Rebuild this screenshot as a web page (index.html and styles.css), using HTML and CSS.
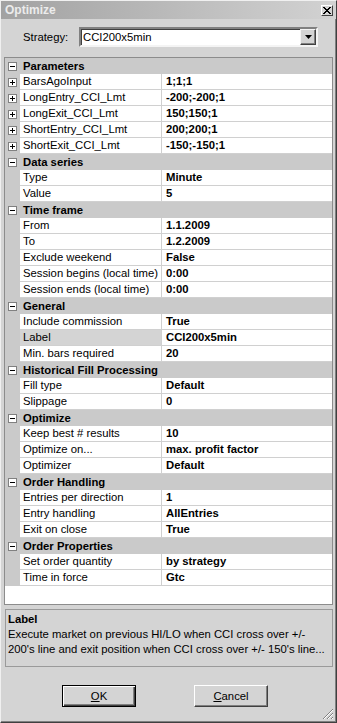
FILE: index.html
```html
<!DOCTYPE html>
<html lang="en">
<head>
    <meta charset="UTF-8">
    <title>Optimize</title>
    <link rel="stylesheet" href="styles.css">
</head>
<body>
    <div class="window">
        <div class="titlebar">
            <span class="title">Optimize</span>
            <span class="close-btn">
                <svg width="8" height="7" viewBox="0 0 8 7"><path d="M0 0 L7 7 M1 0 L8 7 M7 0 L0 7 M8 0 L1 7" stroke="#000" stroke-width="1"/></svg>
            </span>
        </div>

        <div class="strategy-row">
            <label class="strategy-label">Strategy:</label>
            <div class="combo">
                <span class="combo-text">CCI200x5min</span>
                <span class="combo-btn">
                    <svg width="7" height="4" viewBox="0 0 7 4"><path d="M0 0 H7 L3.5 4 Z" fill="#000"/></svg>
                </span>
            </div>
        </div>

        <div class="grid">
            <div class="row category"><span class="gutter"><svg class="box" width="9" height="9" viewBox="0 0 9 9"><rect x="0.5" y="0.5" width="8" height="8" fill="#fff" stroke="#808080"/><path d="M2 4.5 H7" stroke="#000"/></svg></span><span class="cat-name">Parameters</span></div>
            <div class="row"><span class="gutter"><svg class="box" width="9" height="9" viewBox="0 0 9 9"><rect x="0.5" y="0.5" width="8" height="8" fill="#fff" stroke="#808080"/><path d="M2 4.5 H7 M4.5 2 V7" stroke="#000"/></svg></span><span class="name">BarsAgoInput</span><span class="value">1;1;1</span></div>
            <div class="row"><span class="gutter"><svg class="box" width="9" height="9" viewBox="0 0 9 9"><rect x="0.5" y="0.5" width="8" height="8" fill="#fff" stroke="#808080"/><path d="M2 4.5 H7 M4.5 2 V7" stroke="#000"/></svg></span><span class="name">LongEntry_CCI_Lmt</span><span class="value">-200;-200;1</span></div>
            <div class="row"><span class="gutter"><svg class="box" width="9" height="9" viewBox="0 0 9 9"><rect x="0.5" y="0.5" width="8" height="8" fill="#fff" stroke="#808080"/><path d="M2 4.5 H7 M4.5 2 V7" stroke="#000"/></svg></span><span class="name">LongExit_CCI_Lmt</span><span class="value">150;150;1</span></div>
            <div class="row"><span class="gutter"><svg class="box" width="9" height="9" viewBox="0 0 9 9"><rect x="0.5" y="0.5" width="8" height="8" fill="#fff" stroke="#808080"/><path d="M2 4.5 H7 M4.5 2 V7" stroke="#000"/></svg></span><span class="name">ShortEntry_CCI_Lmt</span><span class="value">200;200;1</span></div>
            <div class="row"><span class="gutter"><svg class="box" width="9" height="9" viewBox="0 0 9 9"><rect x="0.5" y="0.5" width="8" height="8" fill="#fff" stroke="#808080"/><path d="M2 4.5 H7 M4.5 2 V7" stroke="#000"/></svg></span><span class="name">ShortExit_CCI_Lmt</span><span class="value">-150;-150;1</span></div>

            <div class="row category"><span class="gutter"><svg class="box" width="9" height="9" viewBox="0 0 9 9"><rect x="0.5" y="0.5" width="8" height="8" fill="#fff" stroke="#808080"/><path d="M2 4.5 H7" stroke="#000"/></svg></span><span class="cat-name">Data series</span></div>
            <div class="row"><span class="gutter"></span><span class="name">Type</span><span class="value">Minute</span></div>
            <div class="row"><span class="gutter"></span><span class="name">Value</span><span class="value">5</span></div>

            <div class="row category"><span class="gutter"><svg class="box" width="9" height="9" viewBox="0 0 9 9"><rect x="0.5" y="0.5" width="8" height="8" fill="#fff" stroke="#808080"/><path d="M2 4.5 H7" stroke="#000"/></svg></span><span class="cat-name">Time frame</span></div>
            <div class="row"><span class="gutter"></span><span class="name">From</span><span class="value">1.1.2009</span></div>
            <div class="row"><span class="gutter"></span><span class="name">To</span><span class="value">1.2.2009</span></div>
            <div class="row"><span class="gutter"></span><span class="name">Exclude weekend</span><span class="value">False</span></div>
            <div class="row"><span class="gutter"></span><span class="name">Session begins (local time)</span><span class="value">0:00</span></div>
            <div class="row"><span class="gutter"></span><span class="name">Session ends (local time)</span><span class="value">0:00</span></div>

            <div class="row category"><span class="gutter"><svg class="box" width="9" height="9" viewBox="0 0 9 9"><rect x="0.5" y="0.5" width="8" height="8" fill="#fff" stroke="#808080"/><path d="M2 4.5 H7" stroke="#000"/></svg></span><span class="cat-name">General</span></div>
            <div class="row"><span class="gutter"></span><span class="name">Include commission</span><span class="value">True</span></div>
            <div class="row"><span class="gutter"></span><span class="name selected">Label</span><span class="value">CCI200x5min</span></div>
            <div class="row"><span class="gutter"></span><span class="name">Min. bars required</span><span class="value">20</span></div>

            <div class="row category"><span class="gutter"><svg class="box" width="9" height="9" viewBox="0 0 9 9"><rect x="0.5" y="0.5" width="8" height="8" fill="#fff" stroke="#808080"/><path d="M2 4.5 H7" stroke="#000"/></svg></span><span class="cat-name">Historical Fill Processing</span></div>
            <div class="row"><span class="gutter"></span><span class="name">Fill type</span><span class="value">Default</span></div>
            <div class="row"><span class="gutter"></span><span class="name">Slippage</span><span class="value">0</span></div>

            <div class="row category"><span class="gutter"><svg class="box" width="9" height="9" viewBox="0 0 9 9"><rect x="0.5" y="0.5" width="8" height="8" fill="#fff" stroke="#808080"/><path d="M2 4.5 H7" stroke="#000"/></svg></span><span class="cat-name">Optimize</span></div>
            <div class="row"><span class="gutter"></span><span class="name">Keep best # results</span><span class="value">10</span></div>
            <div class="row"><span class="gutter"></span><span class="name">Optimize on...</span><span class="value">max. profit factor</span></div>
            <div class="row"><span class="gutter"></span><span class="name">Optimizer</span><span class="value">Default</span></div>

            <div class="row category"><span class="gutter"><svg class="box" width="9" height="9" viewBox="0 0 9 9"><rect x="0.5" y="0.5" width="8" height="8" fill="#fff" stroke="#808080"/><path d="M2 4.5 H7" stroke="#000"/></svg></span><span class="cat-name">Order Handling</span></div>
            <div class="row"><span class="gutter"></span><span class="name">Entries per direction</span><span class="value">1</span></div>
            <div class="row"><span class="gutter"></span><span class="name">Entry handling</span><span class="value">AllEntries</span></div>
            <div class="row"><span class="gutter"></span><span class="name">Exit on close</span><span class="value">True</span></div>

            <div class="row category"><span class="gutter"><svg class="box" width="9" height="9" viewBox="0 0 9 9"><rect x="0.5" y="0.5" width="8" height="8" fill="#fff" stroke="#808080"/><path d="M2 4.5 H7" stroke="#000"/></svg></span><span class="cat-name">Order Properties</span></div>
            <div class="row"><span class="gutter"></span><span class="name">Set order quantity</span><span class="value">by strategy</span></div>
            <div class="row"><span class="gutter"></span><span class="name">Time in force</span><span class="value">Gtc</span></div>
        </div>

        <div class="help">
            <div class="help-title">Label</div>
            <div class="help-text">Execute market on previous HI/LO when CCI cross over +/-<br>200's line and exit position when CCI cross over +/- 150's line...</div>
        </div>

        <div class="buttons">
            <button class="btn default"><u>O</u>K</button>
            <button class="btn"><u>C</u>ancel</button>
        </div>

        <svg class="grip" width="12" height="12" viewBox="0 0 12 12">
            <path d="M11 1 L1 11 M11 5 L5 11 M11 9 L9 11" stroke="#808080" stroke-width="1"/>
            <path d="M11 2 L2 11 M11 6 L6 11 M11 10 L10 11" stroke="#fff" stroke-width="1"/>
        </svg>
    </div>
</body>
</html>
```

FILE: styles.css
```css
body {
    margin: 0;
    font-family: "Liberation Sans", Arial, sans-serif;
    font-size: 11.3px;
    color: #000;
    background-color: #d4d4d4;
}

.window {
    position: relative;
    box-sizing: border-box;
    width: 337px;
    height: 723px;
    background-color: #d4d4d4;
    border: 1px solid;
    border-color: #f0f0f0 #404040 #404040 #f0f0f0;
    box-shadow: inset -1px -1px 0 #808080;
    padding: 0 3px 0 2px;
}

.titlebar {
    display: flex;
    align-items: center;
    justify-content: space-between;
    height: 18px;
    margin: 0 -3px 0 -2px;
    padding: 0 3px 0 4px;
    background: linear-gradient(to right, #a2a2a2, #d2d2d2);
}

.title {
    font-size: 12px;
    font-weight: bold;
    color: #ececec;
}

.close-btn {
    display: flex;
    align-items: center;
    justify-content: center;
    width: 12px;
    height: 11px;
    box-sizing: border-box;
    background-color: #d4d4d4;
    border: 1px solid;
    border-color: #fff #404040 #404040 #fff;
}

.strategy-row {
    display: flex;
    align-items: center;
    margin-top: 8px;
    height: 20px;
}

.strategy-label {
    width: 56px;
    padding-left: 20px;
}

.combo {
    display: flex;
    align-items: center;
    justify-content: space-between;
    box-sizing: border-box;
    width: 239px;
    height: 20px;
    background-color: #fff;
    border: 2px solid;
    border-color: #808080 #f4f4f4 #f4f4f4 #808080;
    box-shadow: inset 1px 1px 0 #404040;
}

.combo-text {
    padding-left: 2px;
}

.combo-btn {
    display: flex;
    align-items: center;
    justify-content: center;
    box-sizing: border-box;
    width: 16px;
    height: 16px;
    background-color: #d4d4d4;
    border: 1px solid;
    border-color: #f4f4f4 #404040 #404040 #f4f4f4;
    box-shadow: inset -1px -1px 0 #808080;
}

.grid {
    box-sizing: border-box;
    height: 548px;
    margin-top: 10px;
    margin-left: 1px;
    background-color: #fff;
    border: 1px solid #8c8c8c;
}

.row {
    display: grid;
    grid-template-columns: 15px 142px 1fr;
    height: 16px;
    line-height: 15px;
}

.gutter {
    display: flex;
    align-items: center;
    background-color: #cacaca;
}

.box {
    display: block;
    margin-left: 3px;
}

.name {
    padding-left: 3px;
    border-right: 1px solid #d0d0d0;
    border-bottom: 1px solid #d0d0d0;
    white-space: nowrap;
    overflow: hidden;
}

.name.selected {
    background-color: #d4d4d4;
}

.value {
    padding-left: 4px;
    font-weight: bold;
    border-bottom: 1px solid #d0d0d0;
    white-space: nowrap;
}

.row.category {
    background-color: #cacaca;
}

.cat-name {
    grid-column: 2 / 4;
    padding-left: 3px;
    font-weight: bold;
    line-height: 16px;
}

.help {
    box-sizing: border-box;
    height: 58px;
    margin-top: 4px;
    margin-left: 2px;
    padding: 2px 0 0 2px;
    border: 1px solid #9a9a9a;
    line-height: 15px;
}

.help-title {
    font-weight: bold;
}

.buttons {
    display: flex;
    gap: 58px;
    margin-top: 18px;
    padding-left: 59px;
}

.btn {
    box-sizing: border-box;
    width: 74px;
    height: 22px;
    padding: 0;
    font-family: inherit;
    font-size: 11.3px;
    color: #000;
    background-color: #d4d4d4;
    border: 1px solid;
    border-color: #fff #404040 #404040 #fff;
    box-shadow: inset -1px -1px 0 #808080;
}

.btn.default {
    border: 1px solid #000;
    box-shadow: inset 1px 1px 0 #fff, inset -1px -1px 0 #404040, inset -2px -2px 0 #808080;
}

.grip {
    position: absolute;
    right: 2px;
    bottom: 2px;
}
```
